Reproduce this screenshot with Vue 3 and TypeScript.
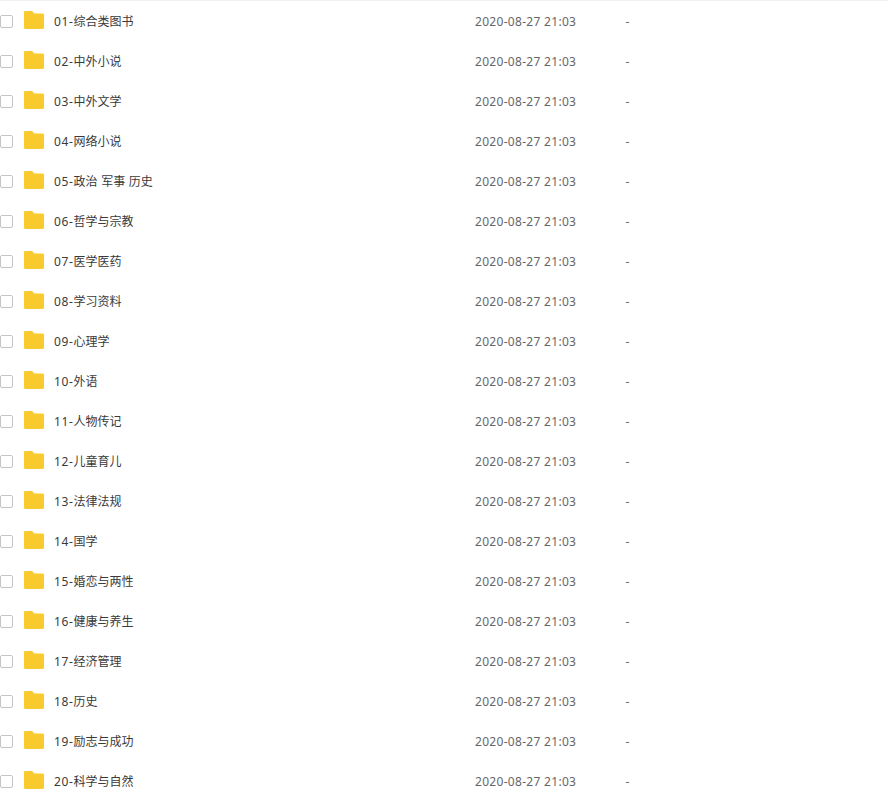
<script setup lang="ts">
const names = [
  '01-综合类图书', '02-中外小说', '03-中外文学', '04-网络小说', '05-政治 军事 历史',
  '06-哲学与宗教', '07-医学医药', '08-学习资料', '09-心理学', '10-外语',
  '11-人物传记', '12-儿童育儿', '13-法律法规', '14-国学', '15-婚恋与两性',
  '16-健康与养生', '17-经济管理', '18-历史', '19-励志与成功', '20-科学与自然',
]
</script>

<template>
  <div class="list">
    <div v-for="name in names" :key="name" class="row">
      <span class="check"></span>
      <svg class="folder" width="20" height="18" viewBox="0 0 20 18">
        <path d="M1 0H8L10.5 2.5H18.5A1.5 1.5 0 0 1 20 4V16.5A1.5 1.5 0 0 1 18.5 18H1.5A1.5 1.5 0 0 1 0 16.5V1A1 1 0 0 1 1 0Z" fill="#f9ca2e" />
      </svg>
      <span class="name"><span class="num">{{ name.slice(0, 3) }}</span>{{ name.slice(3) }}</span>
      <span class="time">2020-08-27 21:03</span>
      <span class="size">-</span>
    </div>
  </div>
</template>

<style>
html, body {
  background: #fff;
}
</style>

<style scoped>
.list {
  width: 888px;
  height: 806px;
  overflow: hidden;
  border-top: 1px solid #f2f2f2;
  box-sizing: border-box;
  font-family: "Noto Sans", "Noto Sans CJK SC", sans-serif;
  font-size: 12px;
}
.row {
  display: flex;
  align-items: center;
  height: 40px;
}
.check {
  width: 13px;
  height: 13px;
  box-sizing: border-box;
  border: 1px solid #c4c4c4;
  border-radius: 2px;
  margin-right: 11px;
}
.folder {
  margin-right: 10px;
  margin-top: -2px;
}
.name {
  width: 421px;
  color: #3a3a3a;
  word-spacing: 0.5px;
}
.num {
  letter-spacing: 0.65px;
}
.time {
  width: 151px;
  color: #666;
  letter-spacing: 0.3px;
}
.size {
  color: #666;
  margin-left: -0.5px;
}
</style>
